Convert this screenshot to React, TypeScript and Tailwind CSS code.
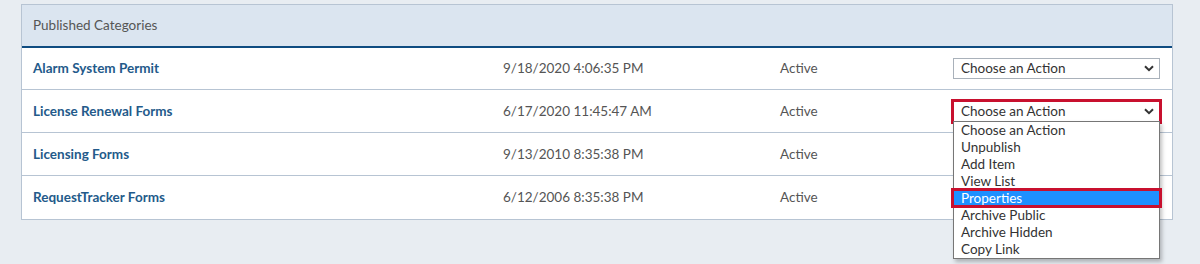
const ROWS = [
  { name: "Alarm System Permit", date: "9/18/2020 4:06:35 PM", status: "Active" },
  { name: "License Renewal Forms", date: "6/17/2020 11:45:47 AM", status: "Active" },
  { name: "Licensing Forms", date: "9/13/2010 8:35:38 PM", status: "Active" },
  { name: "RequestTracker Forms", date: "6/12/2006 8:35:38 PM", status: "Active" },
];

const ACTIONS = [
  "Choose an Action",
  "Unpublish",
  "Add Item",
  "View List",
  "Properties",
  "Archive Public",
  "Archive Hidden",
  "Copy Link",
];

function Chevron() {
  return (
    <svg width="10" height="7" viewBox="0 0 10 7" className="shrink-0">
      <path d="M1 1.2 L5 5.2 L9 1.2" fill="none" stroke="#333" strokeWidth="2" />
    </svg>
  );
}

function ActionSelect({ open }: { open?: boolean }) {
  return (
    <div className="relative">
      {/* select box */}
      <div className="relative flex h-[21px] w-[207px] items-center justify-between border border-[#a9b1ba] bg-white pl-[7px] pr-[5px] text-[13.5px] text-[#333]">
        <span>Choose an Action</span>
        <Chevron />
        {open && (
          <span className="pointer-events-none absolute -inset-[3px] border-[3px] border-[#c8102e]" />
        )}
      </div>

      {/* open list */}
      {open && (
        <div className="absolute left-0 top-[20px] z-10 w-[207px] border border-[#767676] bg-white text-[13.5px] leading-[17px] text-[#333] shadow-[2px_3px_4px_rgba(0,0,0,0.25)]">
          {ACTIONS.map((a) =>
            a === "Properties" ? (
              <div key={a} className="relative h-[17px] bg-[#1e90ff] pl-[7px] text-white">
                {a}
                <span className="pointer-events-none absolute -top-[2px] -bottom-[1px] -left-[3px] -right-[3px] border-[3px] border-[#c8102e]" />
              </div>
            ) : (
              <div key={a} className="h-[17px] pl-[7px]">
                {a}
              </div>
            )
          )}
        </div>
      )}
    </div>
  );
}

export default function App() {
  return (
    <div className="h-[264px] overflow-hidden bg-[#e8edf2] pl-[21px] pt-[4px] font-['Lato',sans-serif]">
      <div className="w-[1152px] border border-[#b7c4d3] bg-white">
        {/* Header */}
        <div className="flex h-[43px] items-center border-b-2 border-[#0f4c81] bg-[#dbe5f0] pl-[11px] pr-3 text-[13.5px] text-[#555]">
          Published Categories
        </div>

        {/* Rows */}
        {ROWS.map((row, i) => (
          <div
            key={row.name}
            className={`grid grid-cols-[470px_277px_173px_1fr] items-center pl-[11px] pr-3 text-[13.5px] ${
              i === 0 ? "h-[42px]" : "h-[43px]"
            } ${i < ROWS.length - 1 ? "border-b border-[#b7c4d3]" : ""}`}
          >
            <span className="font-bold text-[#235a8a]">{row.name}</span>
            <span className="text-[#555]">{row.date}</span>
            <span className="text-[#555]">{row.status}</span>
            {i < 2 && <ActionSelect open={i === 1} />}
          </div>
        ))}
      </div>
    </div>
  );
}
